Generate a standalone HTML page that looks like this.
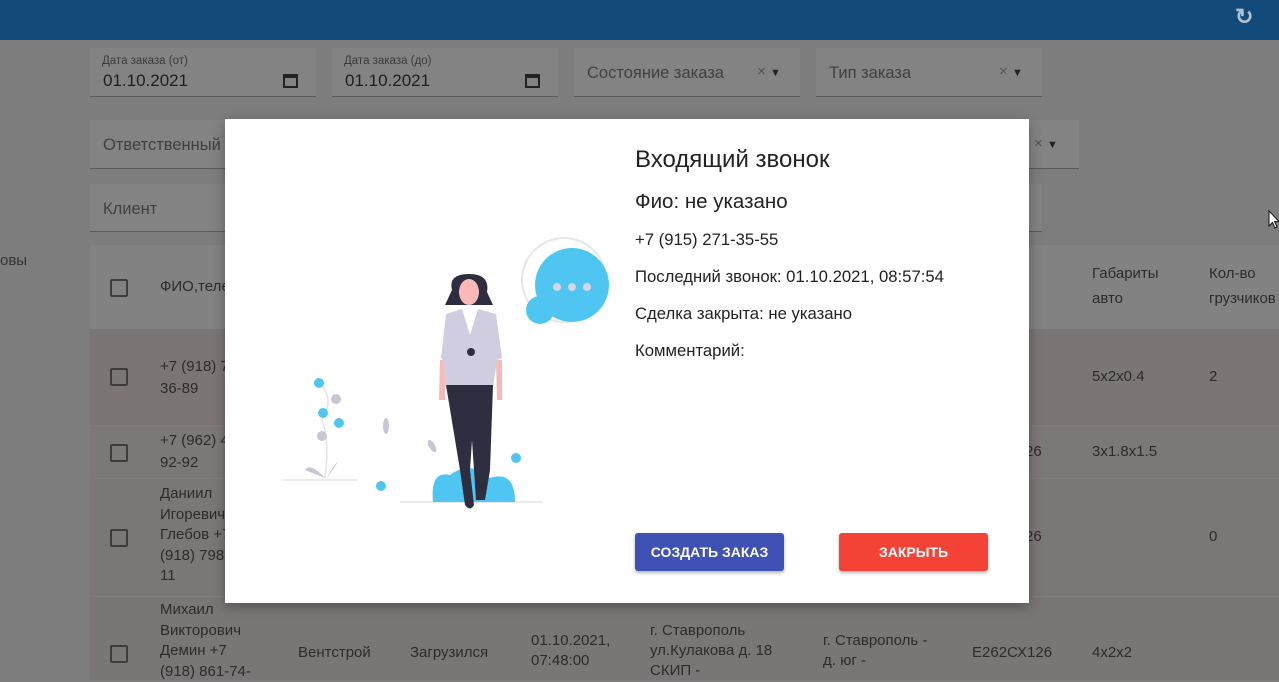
<!DOCTYPE html>
<html><head><meta charset="utf-8"><style>
*{margin:0;padding:0;box-sizing:border-box}
body{width:1279px;height:680px;overflow:hidden;background:#7d7d7d;font-family:"Liberation Sans",sans-serif;position:relative;color:#222}
.a{position:absolute}
.hdr{left:0;top:0;width:1279px;height:40px;background:#124b7a}
.fld{background:#838383;border-bottom:1px solid #5a5a5a}
.lbl{font-size:11.5px;color:#3a3a3a}
.t{color:#2b2b2b;font-size:15px;line-height:22px}
.ph{color:#404040;font-size:16.5px}
.cb{width:18px;height:18px;border:2px solid #3c3c3c;border-radius:2px}
.m{left:225px;top:119px;width:804px;height:484px;background:#fff;box-shadow:0 4px 12px rgba(0,0,0,.3)}
.mt{color:#222}
.btn{color:#fff;font-size:14px;font-weight:bold;text-align:center;line-height:38px;border-radius:3px;box-shadow:0 2px 3px rgba(0,0,0,.3)}
</style></head><body>
<div class="a hdr"></div>
<div class="a" style="left:1235px;top:4px;color:#b0c2d2;font-size:22px;font-weight:bold">&#x21bb;</div>
<!-- filters -->
<div class="a fld" style="left:90px;top:48px;width:226px;height:49px"><div class="a lbl" style="left:12px;top:7px">Дата заказа (от)</div><div class="a" style="left:13px;top:23px;font-size:17px;color:#1e1e1e">01.10.2021</div><div class="a" style="left:193px;top:26px;width:15px;height:14px;border:2px solid #222;border-top-width:4px"></div></div>
<div class="a fld" style="left:332px;top:48px;width:226px;height:49px"><div class="a lbl" style="left:12px;top:7px">Дата заказа (до)</div><div class="a" style="left:13px;top:23px;font-size:17px;color:#1e1e1e">01.10.2021</div><div class="a" style="left:193px;top:26px;width:15px;height:14px;border:2px solid #222;border-top-width:4px"></div></div>
<div class="a fld" style="left:574px;top:48px;width:226px;height:49px"><div class="a ph" style="left:13px;top:16px">Состояние заказа</div><div class="a" style="left:183px;top:15px;color:#555;font-size:15px">× <span style="color:#222;font-size:11px">▼</span></div></div>
<div class="a fld" style="left:816px;top:48px;width:226px;height:49px"><div class="a ph" style="left:13px;top:16px">Тип заказа</div><div class="a" style="left:183px;top:15px;color:#555;font-size:15px">× <span style="color:#222;font-size:11px">▼</span></div></div>
<div class="a fld" style="left:90px;top:120px;width:989px;height:49px"><div class="a ph" style="left:13px;top:16px">Ответственный</div><div class="a" style="left:944px;top:15px;color:#555;font-size:15px">× <span style="color:#222;font-size:11px">▼</span></div></div>
<div class="a fld" style="left:90px;top:184px;width:952px;height:48px"><div class="a ph" style="left:13px;top:16px">Клиент</div></div>
<div class="a" style="left:0;top:252px;color:#333;font-size:15px">овы</div>
<!-- table -->
<div class="a" style="left:90px;top:245px;width:1189px;height:84px;background:#828282"></div>
<div class="a cb" style="left:110px;top:279px"></div>
<div class="a t" style="left:160px;top:276px">ФИО,теле</div>
<div class="a t" style="left:1092px;top:261px;line-height:25px">Габариты<br>авто</div>
<div class="a t" style="left:1209px;top:261px;line-height:25px">Кол-во<br>грузчиков</div>
<div class="a" style="left:90px;top:329px;width:1189px;height:96px;background:#7b7575"></div>
<div class="a cb" style="left:110px;top:368px"></div>
<div class="a t" style="left:160px;top:356px">+7 (918) 7<br>36-89</div>
<div class="a t" style="left:1092px;top:366px">5х2х0.4</div><div class="a t" style="left:1209px;top:366px">2</div>
<div class="a" style="left:90px;top:426px;width:1189px;height:52px;background:#7c7878"></div>
<div class="a cb" style="left:110px;top:444px"></div>
<div class="a t" style="left:160px;top:430px">+7 (962) 4<br>92-92</div>
<div class="a t" style="left:1025px;top:441px">26</div><div class="a t" style="left:1092px;top:441px">3х1.8х1.5</div>
<div class="a" style="left:90px;top:479px;width:1189px;height:117px;background:#7b7777"></div>
<div class="a cb" style="left:110px;top:529px"></div>
<div class="a t" style="left:160px;top:484px;line-height:20.6px">Даниил<br>Игоревич<br>Глебов +7<br>(918) 798-<br>11</div>
<div class="a t" style="left:1025px;top:526px">26</div><div class="a t" style="left:1209px;top:526px">0</div>
<div class="a" style="left:90px;top:597px;width:1189px;height:83px;background:#7b7676"></div>
<div class="a cb" style="left:110px;top:645px"></div>
<div class="a t" style="left:160px;top:600px;line-height:20.6px">Михаил<br>Викторович<br>Демин +7<br>(918) 861-74-</div>
<div class="a t" style="left:298px;top:642px">Вентстрой</div>
<div class="a t" style="left:410px;top:642px">Загрузился</div>
<div class="a t" style="left:531px;top:631px;line-height:20px">01.10.2021,<br>07:48:00</div>
<div class="a t" style="left:650px;top:621px;line-height:20px">г. Ставрополь<br>ул.Кулакова д. 18<br>СКИП -</div>
<div class="a t" style="left:823px;top:631px;line-height:20px">г. Ставрополь -<br>д. юг -</div>
<div class="a t" style="left:972px;top:642px">Е262СХ126</div>
<div class="a t" style="left:1092px;top:642px">4х2х2</div>
<svg class="a" style="left:1268px;top:210px" width="12" height="20" viewBox="0 0 12 20"><path d="M1 1 L1 16 L4.5 12.5 L7 18 L9 17 L6.5 11.5 L11 11.5 Z" fill="#fff" stroke="#111" stroke-width="1"/></svg>
<!-- modal -->
<div class="a m">
<div class="a mt" style="left:410px;top:27px;font-size:24px">Входящий звонок</div>
<div class="a mt" style="left:410px;top:71px;font-size:20.5px">Фио: не указано</div>
<div class="a mt" style="left:410px;top:111px;font-size:16.7px">+7 (915) 271-35-55</div>
<div class="a mt" style="left:410px;top:148px;font-size:16.7px">Последний звонок: 01.10.2021, 08:57:54</div>
<div class="a mt" style="left:410px;top:185px;font-size:16.7px">Сделка закрыта: не указано</div>
<div class="a mt" style="left:410px;top:222px;font-size:16.7px">Комментарий:</div>
<div class="a btn" style="left:410px;top:414px;width:149px;background:#3f51b5">СОЗДАТЬ ЗАКАЗ</div>
<div class="a btn" style="left:614px;top:414px;width:149px;background:#f44336">ЗАКРЫТЬ</div>
</div>
<svg class="a" style="left:0;top:0" width="1279" height="680" viewBox="0 0 1279 680">
<circle cx="564" cy="280" r="42" fill="none" stroke="#e6e6e6" stroke-width="2"/>
<circle cx="540" cy="310" r="14" fill="#4fc6f2"/>
<circle cx="572" cy="285" r="37" fill="#4fc6f2"/>
<circle cx="557" cy="287" r="4" fill="#d6d6e6"/><circle cx="572" cy="287" r="4" fill="#d6d6e6"/><circle cx="587" cy="287" r="4" fill="#d6d6e6"/>
<line x1="283" y1="480" x2="358" y2="480" stroke="#e3e3ea" stroke-width="1.5"/>
<line x1="400" y1="502" x2="543" y2="502" stroke="#e3e3ea" stroke-width="1.5"/>
<path d="M325 478 Q330 440 322 420 Q335 400 320 383" fill="none" stroke="#e3e3ea" stroke-width="1.5"/>
<path d="M325 478 Q310 462 305 470 Z M327 478 Q333 465 338 462 Z" fill="#c8c6d6"/>
<circle cx="319" cy="383" r="5" fill="#4fc6f2"/><circle cx="336" cy="399" r="5" fill="#c8c6d6"/>
<circle cx="323" cy="413" r="5" fill="#4fc6f2"/><circle cx="339" cy="423" r="5" fill="#4fc6f2"/>
<circle cx="322" cy="436" r="5" fill="#c8c6d6"/>
<ellipse cx="386" cy="426" rx="3" ry="8" fill="#c8c6d6"/>
<ellipse cx="432" cy="446" rx="3" ry="7" fill="#c8c6d6" transform="rotate(-30 432 446)"/>
<circle cx="381" cy="486" r="5" fill="#4fc6f2"/><circle cx="516" cy="458" r="5" fill="#4fc6f2"/>
<path d="M433 502 Q430 470 450 475 Q470 460 490 478 Q515 470 515 502 Z" fill="#4fc6f2"/>
<path d="M452 290 Q448 274 469 274 Q490 274 487 292 L493 305 L445 305 Z" fill="#2f2e41"/>
<ellipse cx="469" cy="292" rx="10" ry="13" fill="#f9b9b7"/>
<path d="M440 360 L446 360 L445 400 L439 400 Z M496 360 L502 360 L502 400 L497 400 Z" fill="#f9b9b7"/>
<path d="M446 314 L462 309 L470 335 L478 309 L496 314 L502 358 L497 360 L493 388 L446 388 L443 360 L441 358 Z" fill="#d0cde1"/>
<circle cx="471" cy="352" r="4" fill="#2f2e41"/>
<path d="M446 385 L493 385 L490 470 L485 500 L476 500 L472 440 L470 470 L474 505 Q470 512 465 505 L460 470 Z" fill="#2f2e41"/>
</svg>
</body></html>
